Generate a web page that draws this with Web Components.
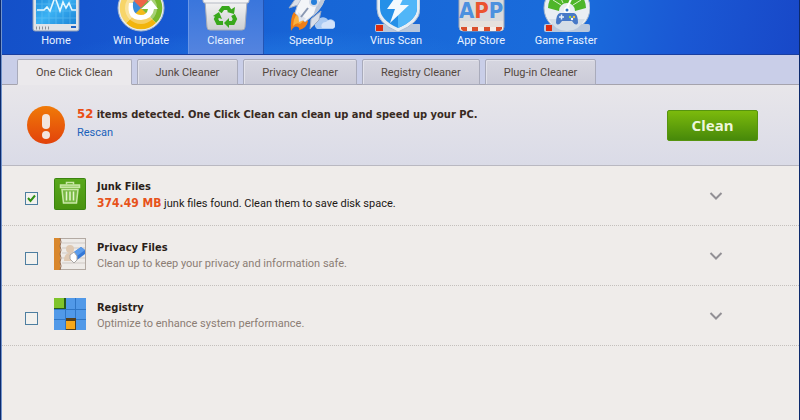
<!DOCTYPE html>
<html lang="en">
<head>
<meta charset="utf-8">
<title>One Click Clean</title>
<style>
  html, body {
    margin: 0;
    min-height: 100%;
  }

  body {
    --bold-font: "DejaVu Sans Condensed", Tahoma, sans-serif;
    display: flex;
    min-height: 100vh;
    font-family: Roboto, Tahoma, sans-serif;
    font-size: 11px;
    line-height: 16px;
    color: #54483f;
  }
</style>
</head>
<body>
<cleaner-app></cleaner-app>

<script>
const icons = {
  home: `
    <defs>
      <linearGradient id="screen" x1="0" y1="0" x2="1" y2="1">
        <stop offset="0" stop-color="#1b84d6"/>
        <stop offset="0.5" stop-color="#3bb2f4"/>
        <stop offset="1" stop-color="#1b84d6"/>
      </linearGradient>
    </defs>
    <path d="M2 -8h46v37a2 2 0 0 1-2 2H4a2 2 0 0 1-2-2z" fill="#dfe3e8" stroke="#8a99b5"/>
    <path d="M5 -8h40v32H5z" fill="url(#screen)"/>
    <path d="M5 4h40M5 11h40M5 18h40M11 0v24M18 0v24M25 0v24M32 0v24M39 0v24" stroke="#7dd0fb" stroke-width="1" opacity="0.4"/>
    <path d="M6 10h7l3-3 3 4 5-14 5 14 3-9 3 6 3-5 3 7h4" fill="none" stroke="#e4f7ff" stroke-width="1.600"/>
    <path d="M5 28h1M8 28h1M11 28h1M14 28h1M17 28h1" stroke="#8c9199" stroke-width="3"/>
    <path d="M40 26h5v2h-5z" fill="#1d61c4"/>`,
  update: `
    <circle cx="25" cy="8" r="23" fill="#e9eef2" stroke="#a9b7c8"/>
    <path d="M25 8L40 -7A21 21 0 0 1 40 23z" fill="#78b82c"/>
    <path d="M25 8l15 15a21 21 0 0 1-30 0z" fill="#f2b50d"/>
    <path d="M25 8L10 23A21 21 0 0 1 10 -7z" fill="#f7d568"/>
    <path d="M25 8L10 -7A21 21 0 0 1 40 -7z" fill="#ee5940"/>
    <circle cx="25" cy="8" r="16" fill="#fff" opacity="0.35"/>
    <circle cx="25" cy="8" r="10" fill="#3b8cd8"/>
    <path d="M25 8L18 1l7-6 7 6z" fill="#ee6548"/>
    <path d="M25 8l7-7 3 7-3 7z" fill="#7fbc2c"/>
    <path d="M25 8l7 7q-7 6-14 0z" fill="#f3ba18"/>
    <path d="M13 3q-3 17 12 17 12-1 13-11h4L35 0l-10 9h7q-1 6-7 6-9 0-8-12z" fill="#fff"/>`,
  cleaner: `
    <defs>
      <linearGradient id="bin" x1="0" y1="0" x2="0" y2="1">
        <stop offset="0" stop-color="#f4f4f4"/>
        <stop offset="1" stop-color="#cdcfd2"/>
      </linearGradient>
    </defs>
    <path d="M4 1h42l-2 26a3 3 0 0 1-3 3H9a3 3 0 0 1-3-3z" fill="url(#bin)" stroke="#a8adb7"/>
    <path d="M2 -4h46v5q0 2-2 2H4q-2 0-2-2z" fill="#f4f4f5" stroke="#b5bac4"/>
    <g fill="none" stroke="#38a81c" stroke-width="4">
      <path d="M19 12l3-4h5l2 3"/>
      <path d="M32 15l2 4-2 4h-5"/>
      <path d="M22 23h-5l-2-4 2-4"/>
    </g>
    <g fill="#38a81c">
      <path d="M26 12l7 2 1-7z"/>
      <path d="M28 18v10l-5-5z"/>
      <path d="M12 16l6-4 3 7z"/>
    </g>`,
  speedup: `
    <path d="M30 28a5 5 0 0 1 2-8 6 6 0 0 1 10 0 5 5 0 0 1 5 9H31z" fill="#a9c9f2"/>
    <path d="M36 28a4 4 0 0 1 4-6 4 4 0 0 1 8 6z" fill="#d3e3fa"/>
    <path d="M8 12q-4 5-3 19 3-6 7-4 2 1 1 3 8-2 9-9z" fill="#ee7f18"/>
    <path d="M10 15q-3 5-3 11 4-4 7-2 3-2 4-5z" fill="#fbb13e"/>
    <path d="M12 5L3 8l7-10h8zM25 19l-1 10 9-9 2-9z" fill="#d8dee9" stroke="#9eabc2"/>
    <path d="M9 13Q12 -2 27 -12H39Q44 4 19 22z" fill="#f3f5f8" stroke="#b8c2d3"/>
    <path d="M27 16Q39 7 39 -7l-9 14z" fill="#bcc7d9"/>
    <circle cx="28" cy="2" r="5" fill="#d5dce8"/>
    <circle cx="28" cy="2" r="3" fill="#257fdb"/>
    <path d="M12 12l8 7-7 3z" fill="#dce2ed"/>
    <path d="M15 17l7-9" stroke="#8a98b2" stroke-width="2"/>`,
  virus: `
    <rect x="4" y="24" width="46" height="8" rx="2" fill="#b8c7dc"/>
    <path d="M5 25h7v6H5z" fill="#dc2c0e"/>
    <path d="M6 -8h43v17q0 14-22 23Q6 23 6 9z" fill="#e6edf4" stroke="#a8bacf"/>
    <path d="M5 25h7v6H5z" fill="#dc2c0e"/>
    <path d="M9 -8h37v16q0 12-19 20Q9 20 9 8z" fill="#2590e8"/>
    <path d="M27 -8h19v16q0 12-19 20z" fill="#51b6f8"/>
    <path d="M26 -5L16 9h8l-5 14L38 5h-9l5-10z" fill="#f3f9fe"/>`,
  store: `
    <rect x="3" y="-10" width="45" height="41" rx="4" fill="#d9dadd" stroke="#a5a9b3"/>
    <text x="3" y="18" font-family="DejaVu Sans Condensed, sans-serif" font-weight="bold" font-size="22" fill="#4d91df">A<tspan fill="#eb5430">P</tspan>P</text>
    <path d="M4 21h43v6H4z" fill="#e6e1dc"/>
    <path d="M4 27h43v1a3 3 0 0 1-3 3H7a3 3 0 0 1-3-3z" fill="#f5eee8"/>
    <path d="M5 27h6v4H7l-2-2zM16 27h6v4h-6zM28 27h6v4h-6zM40 27h6v2l-2 2h-4z" fill="#d94f2c"/>`,
  game: `
    <circle cx="26" cy="8" r="23" fill="#e9eef3" stroke="#a9b9cc"/>
    <path d="M7 8a19 19 0 0 1 38 0L34 11a8 8 0 0 0-16 0z" fill="#4eb62a"/>
    <path d="M12 0l8 5M18 -6l4 9M40 0l-8 5" stroke="#d8f0ca" stroke-width="1"/>
    <rect x="3" y="24" width="46" height="8" rx="2" fill="#b8c7dc"/>
    <path d="M8 19h36q-6 12-18 12T8 19z" fill="#d5dee7"/>
    <path d="M5 25h6v6H5z" fill="#dc2c0e"/>
    <path d="M25 10l7-15" stroke="#fff" stroke-width="2"/>
    <circle cx="26" cy="10" r="3" fill="#fff"/>
    <circle cx="26" cy="10" r="1.500" fill="#2c71c5"/>
    <path d="M19 13h14q4 1 4 10-2 4-6-2H21q-4 6-6 2 0-9 4-10z" fill="#4779c7"/>
    <path d="M18 17h5M20.500 14.500v5" stroke="#e6effb" stroke-width="1.500"/>
    <circle cx="29" cy="17" r="1.200" fill="#9adb4b"/>
    <circle cx="33" cy="17" r="1.200" fill="#f4c23c"/>
    <circle cx="31" cy="19" r="1.200" fill="#fff"/>`,
  junk: `
    <defs>
      <linearGradient id="green" x1="0" y1="0" x2="0" y2="1">
        <stop offset="0" stop-color="#59a81c"/>
        <stop offset="1" stop-color="#49930f"/>
      </linearGradient>
    </defs>
    <rect x="0.500" y="0.500" width="31" height="31" rx="1" fill="url(#green)" stroke="#3b8410"/>
    <g fill="none" stroke="#c9e8a6" stroke-width="1.500">
      <path d="M12.500 6.500v-2h7v2"/>
      <path d="M6.500 7h19v2.500h-19z" fill="#9fd070"/>
      <path d="M8 11.500h16l-1.500 13.500h-13z" fill="#78b944"/>
      <path d="M12.500 13.500v9M16 13.500v9M19.500 13.500v9" stroke="#e3f5cc"/>
    </g>`,
  privacy: `
    <rect x="0.500" y="0.500" width="31" height="31" fill="#eeebe8" stroke="#b3aaa3"/>
    <path d="M8 5h23M8 10h23M8 15h23M8 20h23M8 25h23" stroke="#cfc9c5"/>
    <circle cx="16" cy="11" r="4" fill="#dfc9b3"/>
    <path d="M10 23q0-8 6-8t6 8z" fill="#dfc9b3"/>
    <path d="M0 0h6v32H0z" fill="#d9872c"/>
    <path d="M6 0l1 4-1 4 1 4-1 4 1 4-1 4 1 4-1 4" fill="none" stroke="#946848"/>
    <path d="M20 14l7-5 4 3v4l-8 6z" fill="#3479d8"/>
    <path d="M20 14l7-5 4 3-8 6z" fill="#5a9cec"/>
    <path d="M20 14l-4 3v4l4 4 3-3v-4z" fill="#fff" stroke="#a9a6a4"/>`,
  registry: `
    <rect width="32" height="32" rx="1" fill="#3f8ee3"/>
    <path d="M0 0h32v32H0z" fill="#5199e8"/>
    <path d="M11.500 0v32M21.500 0v32M0 11.500h32M0 21.500h32" stroke="#2f76c6"/>
    <path d="M0 0h12v11H0z" fill="#285a1c"/>
    <path d="M0 0h10v10H0z" fill="#7fc32b"/>
    <path d="M12 20h10v12H12z" fill="#584019"/>
    <path d="M12 23h9v8h-9z" fill="#f8a81b"/>`,
};

class NavItem extends HTMLElement {
  constructor() {
    super();
    this.attachShadow({mode: 'open'});
  }

  connectedCallback() {
    this.shadowRoot.innerHTML = `
      <style>
        :host {
          display: block;
          flex: 0 0 76px;
        }

        a {
          display: flex;
          flex-direction: column;
          justify-content: flex-end;
          align-items: center;
          gap: 1px;
          height: 100%;
          box-sizing: border-box;
          padding-bottom: 5px;
          color: #e8f1ff;
          text-decoration: none;
          white-space: nowrap;
        }

        :host([active]) a {
          background: linear-gradient(#3a76dc, #5484df);
          box-shadow: inset 1px 0 #6b97e6, inset -1px 0 #2455b4;
        }

        svg {
          display: block;
        }
      </style>
      <a href="#"${this.hasAttribute('active') ? ' aria-current="page"' : ''}>
        <svg width="48" height="32" viewBox="1 0 48 32" aria-hidden="true">${icons[this.getAttribute('icon')]}</svg>
        <slot></slot>
      </a>
    `;
  }
}

customElements.define('nav-item', NavItem);

class AppNav extends HTMLElement {
  constructor() {
    super();
    this.attachShadow({mode: 'open'});
    this.shadowRoot.innerHTML = `
      <style>
        :host {
          display: block;
          background:
            radial-gradient(ellipse at 35% 100%, #2b84e866, transparent 30%),
            linear-gradient(100deg, #1450c8, #1658d2 20%, #1766d6 40%, #1a6cdc 72%, #1a58d4 85%, #1848c8);
          border-bottom: 1px solid #1a3fa0;
        }

        nav {
          display: flex;
          gap: 9px;
          height: 54px;
          padding: 0 16px;
        }
      </style>
      <nav><slot></slot></nav>
    `;
  }
}

customElements.define('app-nav', AppNav);

class TabBar extends HTMLElement {
  constructor() {
    super();
    this.attachShadow({mode: 'open'});
    this.tabs = ['One Click Clean', 'Junk Cleaner', 'Privacy Cleaner', 'Registry Cleaner', 'Plug-in Cleaner'];
    this.render();
  }

  render() {
    this.shadowRoot.innerHTML = `
      <style>
        :host {
          display: block;
          background: #c9cee8;
        }

        div {
          display: flex;
          gap: 5px;
          padding: 4px 15px 0;
          box-shadow: inset 0 -1px #a5a3ad;
        }

        button {
          height: 26px;
          padding: 2px 18px 0;
          border: 1px solid #a9abbb;
          border-radius: 2px 2px 0 0;
          background: linear-gradient(#d6d6e0, #cbcbd8);
          box-shadow: inset 1px 1px #e2e2ea;
          color: inherit;
          font: inherit;
          white-space: nowrap;
        }

        button[aria-selected="true"] {
          border-bottom-color: #ebe9ec;
          background: #ebe9ec;
          box-shadow: none;
        }
      </style>
      <div role="tablist">
        ${this.tabs
          .map((tab, i) => `<button type="button" role="tab" aria-selected="${i === 0}">${tab}</button>`)
          .join('')}
      </div>
    `;
  }
}

customElements.define('tab-bar', TabBar);

class ScanSummary extends HTMLElement {
  constructor() {
    super();
    this.attachShadow({mode: 'open'});
    this.shadowRoot.innerHTML = `
      <style>
        :host {
          display: flex;
          align-items: center;
          gap: 12px;
          height: 80px;
          padding: 0 41px 0 25px;
          border-bottom: 1px solid #b9b8c1;
          background: linear-gradient(#e8e6ea, #dadbe7);
        }

        .text {
          flex: 1;
          padding-bottom: 4px;
        }

        p {
          margin: 0;
          line-height: 18px;
          font-family: var(--bold-font);
          font-weight: bold;
          color: #382a22;
        }

        strong {
          font-size: 13px;
          color: #ea4e14;
        }

        a {
          display: inline-block;
          line-height: 18px;
          color: #1b62bb;
          text-decoration: none;
        }

        button {
          width: 91px;
          height: 31px;
          padding: 0;
          border: 1px solid #56940f;
          border-radius: 2px;
          background: linear-gradient(#7cba0c, #47890a);
          color: #eef6dc;
          font: bold 15px/18px "Noto Sans", Tahoma, sans-serif;
        }
      </style>
      <svg width="38" height="38" viewBox="0 0 38 38" aria-hidden="true">
        <defs>
          <linearGradient id="alert" x1="0" y1="0" x2="0" y2="1">
            <stop offset="0" stop-color="#f07a08"/>
            <stop offset="1" stop-color="#e2420b"/>
          </linearGradient>
        </defs>
        <circle cx="19" cy="19" r="19" fill="url(#alert)"/>
        <rect x="15" y="8" width="8" height="15" rx="4" fill="#f3e6de"/>
        <circle cx="19" cy="29" r="4" fill="#f3e6de"/>
      </svg>
      <div class="text">
        <p><strong>52</strong> items detected. One Click Clean can clean up and speed up your PC.</p>
        <a href="#">Rescan</a>
      </div>
      <button type="button">Clean</button>
    `;
  }
}

customElements.define('scan-summary', ScanSummary);

class ScanRow extends HTMLElement {
  constructor() {
    super();
    this.attachShadow({mode: 'open'});
  }

  connectedCallback() {
    const checked = this.hasAttribute('checked') ? 'checked' : '';

    this.shadowRoot.innerHTML = `
      <style>
        :host {
          display: flex;
          align-items: center;
          height: 59px;
          padding: 0 76px 0 23px;
          border-bottom: 1px dotted #c4c0bd;
          color: #8b7d74;
        }

        :host([checked]) {
          color: #1c1815;
        }

        input {
          appearance: none;
          width: 13px;
          height: 13px;
          margin: 6px 16px 0 0;
          border: 1px solid #4d7ea0;
          background: #f2f1ee;
        }

        input:checked {
          background: #f2f1ee url('data:image/svg+xml,<svg xmlns="http://www.w3.org/2000/svg" viewBox="0 0 11 11"><path d="M2 5l2.500 3L9 2.500" fill="none" stroke="%23309016" stroke-width="2"/></svg>');
        }

        svg {
          display: block;
        }

        .icon {
          margin-bottom: 4px;
        }

        label {
          flex: 1;
          padding-left: 11px;
        }

        h2 {
          margin: 0;
          font-family: var(--bold-font);
          font-size: 11px;
          line-height: 16px;
          color: #2a1e19;
        }

        button {
          width: 14px;
          height: 12px;
          padding: 0;
          border: 0;
          background: none;
        }

        ::slotted(strong) {
          font-family: var(--bold-font);
          font-size: 12px;
          color: #e7521a;
        }
      </style>
      <input type="checkbox" id="pick" ${checked}>
      <svg class="icon" width="32" height="32" viewBox="0 0 32 32" aria-hidden="true">${icons[this.getAttribute('icon')]}</svg>
      <label for="pick">
        <h2>${this.getAttribute('heading')}</h2>
        <slot></slot>
      </label>
      <button type="button" aria-label="Show details">
        <svg width="14" height="12" viewBox="0 0 14 12"><path d="M1.500 3l5.500 5.500L12.500 3" fill="none" stroke="#929095" stroke-width="2"/></svg>
      </button>
    `;
  }
}

customElements.define('scan-row', ScanRow);

class CleanerApp extends HTMLElement {
  constructor() {
    super();
    this.attachShadow({mode: 'open'});
    this.shadowRoot.innerHTML = `
      <style>
        :host {
          display: block;
          flex: 1;
          min-width: 0;
          border: solid #0c2a6c;
          border-width: 0 1px;
          box-shadow: inset 1px 0 #7193cc;
          background: #efecea;
          overflow: hidden;
        }

        main {
          display: block;
          padding-left: 1px;
        }
      </style>
      <main>
        <app-nav>
          <nav-item icon="home">Home</nav-item>
          <nav-item icon="update">Win Update</nav-item>
          <nav-item icon="cleaner" active>Cleaner</nav-item>
          <nav-item icon="speedup">SpeedUp</nav-item>
          <nav-item icon="virus">Virus Scan</nav-item>
          <nav-item icon="store">App Store</nav-item>
          <nav-item icon="game">Game Faster</nav-item>
        </app-nav>
        <tab-bar></tab-bar>
        <scan-summary></scan-summary>
        <scan-row icon="junk" heading="Junk Files" checked><strong>374.49 MB</strong> junk files found. Clean them to save disk space.</scan-row>
        <scan-row icon="privacy" heading="Privacy Files">Clean up to keep your privacy and information safe.</scan-row>
        <scan-row icon="registry" heading="Registry">Optimize to enhance system performance.</scan-row>
      </main>
    `;
  }
}

customElements.define('cleaner-app', CleanerApp);
</script>
</body>
</html>
